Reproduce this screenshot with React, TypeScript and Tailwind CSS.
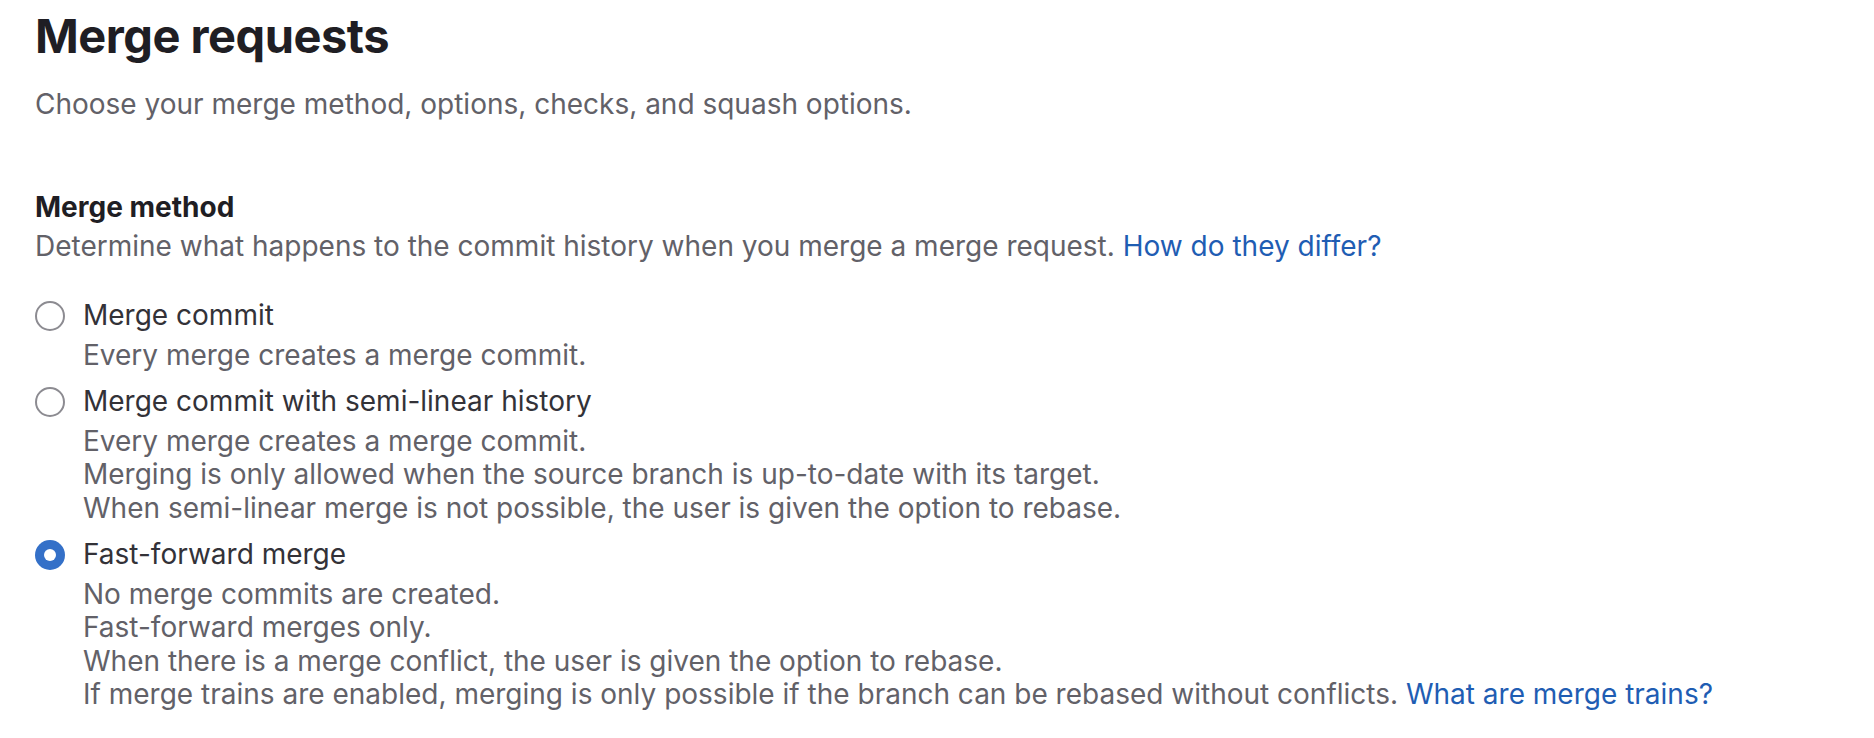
import React from "react";

interface MergeOption {
  id: string;
  label: string;
  help: React.ReactNode[];
}

const options: MergeOption[] = [
  { id: "merge", label: "Merge commit", help: ["Every merge creates a merge commit."] },
  {
    id: "rebase_merge",
    label: "Merge commit with semi-linear history",
    help: [
      "Every merge creates a merge commit.",
      "Merging is only allowed when the source branch is up-to-date with its target.",
      "When semi-linear merge is not possible, the user is given the option to rebase.",
    ],
  },
  {
    id: "ff",
    label: "Fast-forward merge",
    help: [
      "No merge commits are created.",
      "Fast-forward merges only.",
      "When there is a merge conflict, the user is given the option to rebase.",
      <>
        If merge trains are enabled, merging is only possible if the branch can be rebased without conflicts.{" "}
        <a href="#" className="text-[#1f5db3]">What are merge trains?</a>
      </>,
    ],
  },
];

const Radio = ({ checked }: { checked: boolean }) =>
  checked ? (
    <span className="w-[30px] h-[30px] rounded-full bg-[#3470c8] flex items-center justify-center flex-shrink-0">
      <span className="w-[12px] h-[12px] rounded-full bg-white" />
    </span>
  ) : (
    <span className="w-[30px] h-[30px] rounded-full border-2 border-[#8c8b91] bg-white flex-shrink-0" />
  );

const App = () => {
  const selected = "ff";
  return (
    <div className="min-h-screen bg-white px-[35px] pt-[7px] font-['Inter',sans-serif] text-[28px] leading-[33.5px] text-[#333238]">
      <h1 className="text-[47px] leading-[57.6px] font-bold text-[#1f1e24] tracking-[-0.5px]">Merge requests</h1>
      <p className="mt-[23px] text-[#626168]">Choose your merge method, options, checks, and squash options.</p>

      <section className="mt-[70px]">
        <h2 className="font-bold text-[#1f1e24]">Merge method</h2>
        <p className="mt-[5px] text-[#626168]">
          Determine what happens to the commit history when you merge a merge request.{" "}
          <a href="#" className="text-[#1f5db3]">How do they differ?</a>
        </p>

        <div className="mt-[36px] flex flex-col gap-[13px]">
          {options.map((opt) => (
            <label key={opt.id} className="flex gap-[18px] items-start">
              <span className="h-[33.5px] flex items-center">
                <Radio checked={opt.id === selected} />
              </span>
              <span>
                <span className="block">{opt.label}</span>
                <span className="block mt-[6px] text-[#626168]">
                  {opt.help.map((line, i) => (
                    <span key={i} className="block">{line}</span>
                  ))}
                </span>
              </span>
            </label>
          ))}
        </div>
      </section>
    </div>
  );
};

export default App;
